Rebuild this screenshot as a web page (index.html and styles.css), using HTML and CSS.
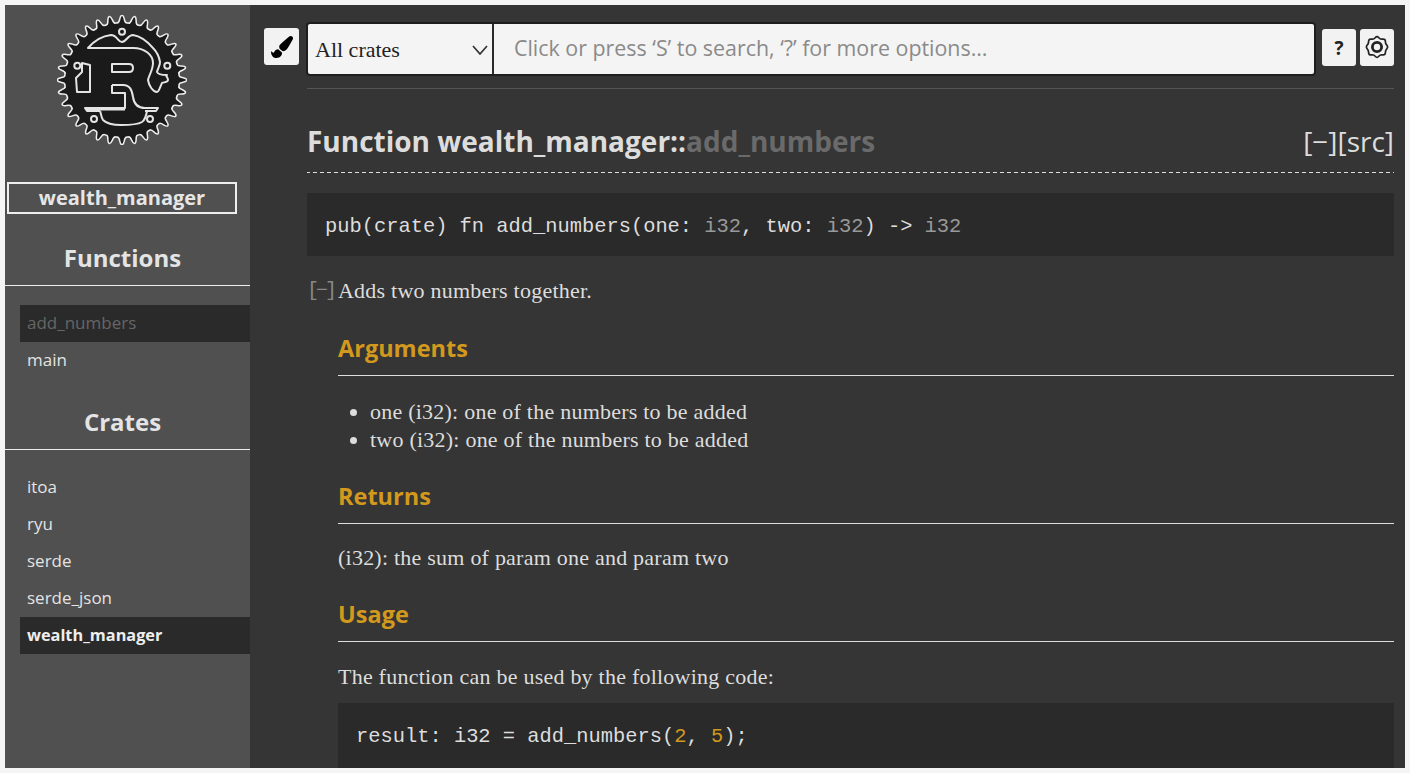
FILE: index.html
```html
<!DOCTYPE html>
<html lang="en">
<head>
<meta charset="utf-8">
<title>wealth_manager::add_numbers</title>
<link rel="stylesheet" href="styles.css">
</head>
<body>
<div class="app">
  <nav class="sidebar">
    <svg class="logo" viewBox="0 0 130 130" width="130" height="130" aria-label="Rust logo">
      <defs>
        <path id="t1" d="M60.5 9 Q62.8 8.2 63.5 4 Q64.2 1 65 1 Q65.8 1 66.5 4 Q67.2 8.2 69.5 9 L65 30 Z"/>
        <g id="t2"><use href="#t1"/><use href="#t1" transform="rotate(11.25 65 65)"/></g>
        <g id="t4"><use href="#t2"/><use href="#t2" transform="rotate(22.5 65 65)"/></g>
        <g id="t8"><use href="#t4"/><use href="#t4" transform="rotate(45 65 65)"/></g>
        <g id="t16"><use href="#t8"/><use href="#t8" transform="rotate(90 65 65)"/></g>
        <g id="gear"><use href="#t16"/><use href="#t16" transform="rotate(180 65 65)"/><circle cx="65" cy="65" r="56.5"/></g>
      </defs>
      <use href="#gear" class="gear-edge"/>
      <use href="#gear" class="gear-fill"/>
      <g class="logo-lines">
        <path d="M31 33 H76 C88 33 96 40 96 48 C96 55 92 60 91 65 C92 71 96 77 100 77 C102 77 103 72 105 68 C108 67 111 67 111 65 C111 62 108 61 110 60 C106 60 101 60 100 57 C101 53 103 51 103 47 C102 41 99 36 96 33 C90 26 83 21 76 20 C71 20 69 27 65 27 C61 27 60 20 54 20 C45 21 37 26 31 33 Z" fill="#1a1a1a"/>
        <path d="M55 49 H72 C75 49 76 51 76 53 C76 55 75 57 72 57 H55 Z"/>
        <path d="M55 70 H66 C73 70 75 75 76 82 C77 89 81 93 88 93 H101 L99 96 H88"/>
        <path d="M55 70 V78 H68 V93 H28 L30 96 H43 M30 94.5 H68"/>
        <path d="M90 96 C89 102 88 105 85 107 C80 110 70 110 64 110 C57 110 50 109 46 105 C44 102 44 98 43 96"/>
        <path d="M25 48 L33 50 V77 H20 L19 63 L25 57 Z"/>
        <circle cx="65" cy="16.7" r="3"/>
        <circle cx="20.3" cy="50.7" r="3"/>
        <circle cx="110.3" cy="50.7" r="3"/>
        <circle cx="37" cy="104" r="3"/>
        <circle cx="93" cy="104" r="3"/>
      </g>
    </svg>
    <p class="location">wealth_manager</p>
    <h3 class="side-title">Functions</h3>
    <ul class="side-list">
      <li class="side-item current dim">add_numbers</li>
      <li class="side-item">main</li>
    </ul>
    <h3 class="side-title crates">Crates</h3>
    <ul class="side-list">
      <li class="side-item">itoa</li>
      <li class="side-item">ryu</li>
      <li class="side-item">serde</li>
      <li class="side-item">serde_json</li>
      <li class="side-item current strong">wealth_manager</li>
    </ul>
  </nav>
  <main class="main">
    <div class="topbar">
      <button class="tool brush" type="button" aria-label="Theme">
        <svg viewBox="0 0 512 512" width="22" height="22"><path d="M167.02 309.34c-40.12 2.58-76.53 17.86-97.19 72.3-2.35 6.21-8 9.98-14.59 9.98-11.11 0-45.46-27.67-55.25-34.35C0 439.62 37.93 512 128 512c75.86 0 128-43.77 128-120.19 0-3.11-.65-6.08-.97-9.13l-88.01-73.34zM457.89 0c-15.16 0-29.37 6.71-40.21 16.45C213.27 199.05 192 203.34 192 257.09c0 13.7 3.25 26.76 8.73 38.7l63.82 53.18c7.21 1.8 14.64 3.03 22.39 3.03 62.11 0 98.11-45.47 211.16-256.46 7.38-14.35 13.9-29.85 13.9-45.99C512 20.64 486 0 457.89 0z"/></svg>
      </button>
      <form class="search">
        <div class="crate-select">
          <span>All crates</span>
          <svg viewBox="0 0 16 10" width="16" height="10"><path d="M1 1 L8 9 L15 1" fill="none" stroke="#333" stroke-width="1.7"/></svg>
        </div>
        <input class="search-input" type="text" placeholder="Click or press ‘S’ to search, ‘?’ for more options…">
      </form>
      <button class="tool help" type="button">?</button>
      <button class="tool wheel" type="button" aria-label="Settings">
        <svg viewBox="0 0 24 24" width="24" height="24">
          <path d="M12 1.6 C13.5 1.6 14 3.6 15.6 4 C17.4 4.4 19 3.6 19.8 4.6 C20.8 5.8 20.2 7.2 20.8 8.6 C21.4 10 22.6 10.8 22.6 12 C22.6 13.2 21.4 14 20.8 15.4 C20.2 16.8 20.8 18.2 19.8 19.4 C19 20.4 17.4 19.6 15.6 20 C14 20.4 13.5 22.4 12 22.4 C10.5 22.4 10 20.4 8.4 20 C6.6 19.6 5 20.4 4.2 19.4 C3.2 18.2 3.8 16.8 3.2 15.4 C2.6 14 1.4 13.2 1.4 12 C1.4 10.8 2.6 10 3.2 8.6 C3.8 7.2 3.2 5.8 4.2 4.6 C5 3.6 6.6 4.4 8.4 4 C10 3.6 10.5 1.6 12 1.6 Z" fill="none" stroke="#222" stroke-width="1.7" stroke-linejoin="round"/>
          <circle cx="12" cy="12" r="4.6" fill="none" stroke="#222" stroke-width="2.8"/>
        </svg>
      </button>
    </div>
    <div class="content">
      <h1 class="title">
        <span>Function wealth_manager::<span class="title-fn">add_numbers</span></span>
        <span class="title-links">[−][src]</span>
      </h1>
      <pre class="signature">pub(crate) fn add_numbers(one: <span class="type">i32</span>, two: <span class="type">i32</span>) -&gt; <span class="type">i32</span></pre>
      <div class="summary"><span class="toggle">[−]</span><p class="prose">Adds two numbers together.</p></div>
      <div class="docs">
        <h2 class="doc-heading first">Arguments</h2>
        <ul class="args">
          <li>one (i32): one of the numbers to be added</li>
          <li>two (i32): one of the numbers to be added</li>
        </ul>
        <h2 class="doc-heading">Returns</h2>
        <p class="prose after-heading">(i32): the sum of param one and param two</p>
        <h2 class="doc-heading">Usage</h2>
        <p class="prose after-usage">The function can be used by the following code:</p>
        <pre class="example">result: i32 = add_numbers(<span class="num">2</span>, <span class="num">5</span>);</pre>
      </div>
    </div>
  </main>
</div>
</body>
</html>
```
FILE: styles.css
```css
* { box-sizing: border-box; }
html, body { margin: 0; height: 100%; }
body { background: #f5f5f5; padding: 5px; overflow: hidden; }
.app { display: flex; height: 763px; overflow: hidden; background: #353535; color: #ddd; font-family: "Liberation Serif", serif; }

.sidebar { width: 245px; flex: none; background: #505050; padding-top: 10px; font-family: "Open Sans", sans-serif; }
.logo { display: block; margin-left: 52px; }
.gear-edge { fill: #eee; stroke: #eee; stroke-width: 3; stroke-linejoin: round; }
.gear-fill { fill: #1a1a1a; }
.logo-lines { fill: none; stroke: #e4e4e4; stroke-width: 2; stroke-linejoin: round; }
.location { margin: 37px 0 0 2px; width: 230px; height: 32px; border: 2px solid #eee; font-size: 20px; font-weight: 700; line-height: 28px; text-align: center; color: #e6e6e6; }
.side-title { margin: 28px 0 0; height: 44px; padding: 0 10px 11px 0; line-height: 32px; border-bottom: 1px solid #eee; font-size: 24px; font-weight: 700; text-align: center; color: #e4e4e4; }
.side-title.crates { margin-top: 27px; }
.side-list { list-style: none; margin: 19px 0 0 15px; padding: 0; }
.side-item { height: 37px; line-height: 36px; padding-left: 7px; font-size: 17px; color: #e4e4e4; }
.current { background: #2a2a2a; }
.dim { color: #666; }
.strong { font-size: 16.3px; font-weight: 700; color: #eee; }

.main { flex: 1; min-width: 0; padding: 17px 11px 0 14px; }
.topbar { display: flex; align-items: flex-start; }
.tool { width: 34px; height: 37px; padding: 0; border: 0; border-radius: 3px; background: #f2f2f2; color: #222; display: flex; align-items: center; justify-content: center; }
.brush { width: 35px; margin: 6px 7px 0 0; }
.help { margin: 7px 4px 0 6px; font: 700 19px "Open Sans", sans-serif; }
.wheel { margin-top: 7px; align-items: flex-start; padding-top: 6px; }
.search { flex: 1; display: flex; height: 54px; border: 2px solid #1e1e1e; border-radius: 4px; background: #f4f4f4; overflow: hidden; }
.crate-select { width: 186px; flex: none; display: flex; align-items: center; justify-content: space-between; padding: 2px 4px 0 7px; border-right: 2px solid #2a2a2a; font-size: 22px; color: #222; }
.search-input { flex: 1; min-width: 0; border: 0; outline: 0; background: transparent; padding: 0 0 3px 20px; font: 21.4px "Open Sans", sans-serif; color: #333; }
.search-input::placeholder { color: #8a8a8a; opacity: 1; }

.content { margin: 12px 0 0 43px; border-top: 1px solid #555; }
.title { display: flex; justify-content: space-between; margin: 0; padding: 32px 0 11px; border-bottom: 1px dashed #ddd; border-image: repeating-linear-gradient(90deg, #ddd 0 4px, transparent 4px 7px) 1; font: 700 28px/40px "Open Sans", sans-serif; color: #ddd; }
.title-fn { color: #6a6a6a; }
.title-links { font-weight: 400; }
.signature { margin: 20px 0 0; height: 63px; padding: 0 18px; background: #2a2a2a; font: 20.4px/68px "Liberation Mono", monospace; color: #ddd; }
.type { color: #999; }
.summary { display: flex; margin-top: 21px; }
.toggle { width: 31px; flex: none; font: 20px/28px "Liberation Mono", monospace; letter-spacing: -3px; color: #888; }
.prose { margin: 0; font-size: 22px; letter-spacing: 0.23px; line-height: 28px; }
.docs { margin-left: 31px; }
.doc-heading { margin: 26px 0 0; padding-bottom: 11px; border-bottom: 1px solid #ddd; font: 700 23.5px/32px "Open Sans", sans-serif; color: #d2991d; }
.doc-heading.first { margin-top: 27px; }
.args { margin: 22px 0 0; padding: 0 0 0 32px; font-size: 22px; letter-spacing: 0.23px; line-height: 28px; }
.after-heading { margin-top: 20px; }
.after-usage { margin-top: 21px; }
.example { margin: 12px 0 0; padding: 18px 18px 40px; background: #2a2a2a; font: 20.4px/32px "Liberation Mono", monospace; color: #ddd; }
.num { color: #d2991d; }
```
